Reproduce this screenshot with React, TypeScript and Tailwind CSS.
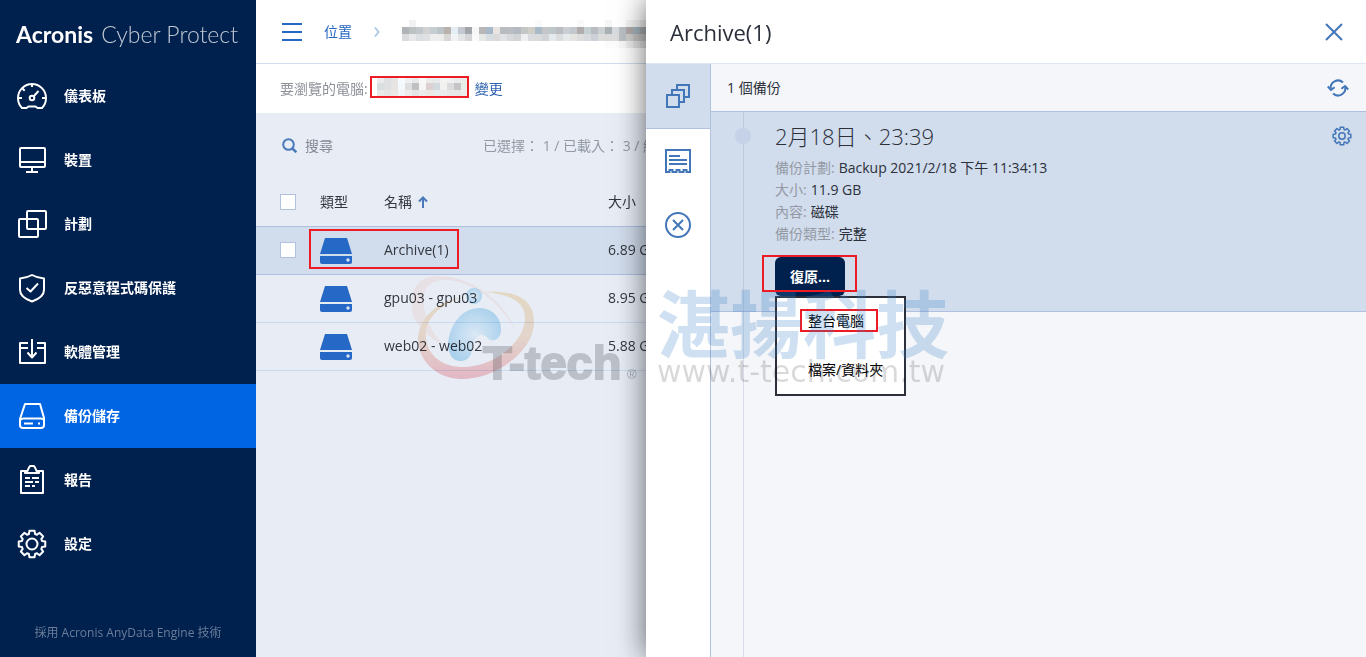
import type { ReactNode } from "react";
import clsx from "clsx";

const FONT = "font-['Open_Sans','Noto_Sans_CJK_TC',sans-serif]";

function gearPath(c: number, outer: number, inner: number) {
  const step = Math.PI / 4;
  const points: string[] = [];
  for (let i = 0; i < 8; i++) {
    const a = i * step - Math.PI / 2;
    [
      [-0.3, inner],
      [-0.19, outer],
      [0.19, outer],
      [0.3, inner],
    ].forEach(([offset, r]) => {
      const x = c + r * Math.cos(a + offset);
      const y = c + r * Math.sin(a + offset);
      points.push(`${x.toFixed(2)} ${y.toFixed(2)}`);
    });
  }
  return `M${points.join("L")}Z`;
}

function NavIcon({ children }: { children: ReactNode }) {
  return (
    <svg
      viewBox="0 0 32 32"
      className="size-8 shrink-0"
      fill="none"
      stroke="currentColor"
      strokeWidth="2"
      strokeLinejoin="round"
      aria-hidden="true"
    >
      {children}
    </svg>
  );
}

const NAV_ITEMS: { label: string; active?: boolean; icon: ReactNode }[] = [
  {
    label: "儀表板",
    icon: (
      <>
        <path d="M6 28C3 25 2 21 2 18a14 14 0 0 1 28 0c0 3-1 7-4 10h-4.500l-2-1.500h-7l-2 1.500z" />
        <path d="M16 4v3M2 18h4M26 18h4M6.500 8.500l2.200 2.200M17.500 16.500l5-5.500" />
        <circle cx="16" cy="18" r="2.300" />
      </>
    ),
  },
  {
    label: "裝置",
    icon: (
      <>
        <rect x="4" y="4" width="25" height="19" rx="1" />
        <path d="M4 18h25M16 23v5M10 28h12" />
      </>
    ),
  },
  {
    label: "計劃",
    icon: (
      <>
        <rect x="11" y="3" width="19" height="18" rx="1" />
        <rect x="3" y="11" width="19" height="18" rx="1" />
      </>
    ),
  },
  {
    label: "反惡意程式碼保護",
    icon: (
      <>
        <path d="M16 3c3.500 2 7.500 3 12 3.500V18c0 5-5 9-12 11.500C9 27 4 23 4 18V6.500C8.500 6 12.500 5 16 3z" />
        <path d="M10.500 16l4 3.500 7.500-8" />
      </>
    ),
  },
  {
    label: "軟體管理",
    icon: (
      <>
        <path d="M12 7H4v20h25V7h-8M4 12h8M21 12h8M16 3v18" />
        <path d="M11.500 16.500l4.500 5 4.500-5" />
      </>
    ),
  },
  {
    label: "備份儲存",
    active: true,
    icon: (
      <>
        <path d="M9 4h15l4 14v7q0 3-3 3H7q-3 0-3-3v-6z" />
        <path d="M4.500 20q1-1.500 3-1.500h17q2.500 0 3.500 1.500M8 23.500h9M22 23.500h2" />
      </>
    ),
  },
  {
    label: "報告",
    icon: (
      <>
        <path d="M9 7H5v22h22V7h-4" />
        <path d="M9 9V7h2.500l1-2.500L14 2h4l1.500 2.500 1 2.500H23v2z" />
        <path d="M9 14h5M16 14h7M9 18h8M19 18h4M9 22h5M16 22h3" />
      </>
    ),
  },
  {
    label: "設定",
    icon: (
      <>
        <path d={gearPath(16, 13.5, 10.5)} />
        <circle cx="16" cy="16" r="5.500" />
      </>
    ),
  },
];

const ROWS = [
  { name: "Archive(1)", size: "6.89 GB", selected: true },
  { name: "gpu03 - gpu03", size: "8.95 GB", selected: false },
  { name: "web02 - web02", size: "5.88 GB", selected: false },
];

const DETAILS = [
  { label: "備份計劃:", value: "Backup 2021/2/18 下午 11:34:13" },
  { label: "大小:", value: "11.9 GB" },
  { label: "內容:", value: "磁碟" },
  { label: "備份類型:", value: "完整" },
];

// Masked text, one colour per 7px block
const PATH_BLOCKS = [
  "#fff #f1f2f2 #fff #fff #fff #fff #fff #fff #fff #fff #fff #fff #fff #fff #fff #fff #fff #fff #fff #f8fafb #fff #fff #fff #fff #fff #f8f9fb #fff #fff #fff #f5f7f7 #fff #fff #f4f5f5 #f2f3f3 #ededee",
  "#b0b3b7 #bcc1c2 #c1c8cb #d3d3d3 #c6ced4 #bbc4c6 #b8b1ac #e4eef5 #c3c9ce #a2a6aa #f6f7f7 #b8b6b7 #a9b8c9 #e8e4e1 #b9bcbe #babec2 #b4bac2 #c4c7c4 #d0ccc6 #a9b9c5 #c5c6c7 #bdc6c9 #babec2 #cbcfd5 #c2c8ce #b2adad #c4d0d3 #b9bdc2 #cbd0d1 #a9b1b4 #d8dcde #b9c1c5 #b2aaa8 #a6b5bf #a8adb1",
  "#dadbdd #e8e9ea #dcdfe1 #dfe0e3 #ededed #ececed #d9d7d6 #f1f2f4 #e3e4e6 #d5d5d7 #fafafa #e6e7e7 #d7dde3 #dadadb #e1e2e5 #d8d9db #d3d4d7 #eeeff0 #d9dbde #d9dadc #d1d4d7 #e4eaed #dcdddf #e7eaed #e6e4e1 #dddddf #d6d9de #cdd0d8 #dcdcdd #dbdbdb #dcdcdc #bac0c4 #cfcfcf #c5c5c5 #c4c4c4",
  "#fff #fff #fff #fff #fff #fff #fff #fff #fff #fff #fff #fff #fff #fff #fff #fff #fff #fff #fff #fff #fff #fff #fff #fff #fff #fff #fff #fff #fff #fcfcfc #fcfcfc #f8f8f8 #ededed #e4e4e4 #dedede",
].map((row) => row.split(" "));

const HOST_BLOCKS = [
  "#ebeced #dfe0e1 #e4e4e5 #f9fafb #eef0f1 #e9e9e9 #f8f8f7 #ebebea #e8eaeb #f3f3f2 #f0f0f0 #eaecec #ebebea",
  "#d9dee1 #dedfe0 #e8e4e2 #f4f9fd #dfdfdf #bfc0c1 #f6f6f6 #dcd1d0 #d2d9df #f1f1f0 #dadcdd #c7c4c9 #e6ece6",
  "#e9e9ea #e5e5e6 #e9e8e7 #f3f4f5 #ececec #e4e4e5 #ebebeb #ebe8e5 #e9eced #eaeaea #e7e7e7 #e6e6e7 #ececec",
].map((row) => row.split(" "));

function Blocks({ rows, label }: { rows: string[][]; label: string }) {
  const width = rows[0].length * 7;
  const height = rows.length * 7;
  return (
    <svg width={width} height={height} className="shrink-0" shapeRendering="crispEdges" role="img" aria-label={label}>
      {rows.map((row, y) =>
        row.map((fill, x) => <rect key={`${x}-${y}`} x={x * 7} y={y * 7} width="7" height="7" fill={fill} />)
      )}
    </svg>
  );
}

function Sidebar() {
  return (
    <aside className="flex w-64 shrink-0 flex-col bg-[#00204d] text-white">
      <a
        href="#"
        className="flex h-16 items-center gap-2 pl-4 pt-1 font-['Lato',sans-serif] text-[23px] whitespace-nowrap"
      >
        <span className="font-bold">Acronis</span>
        <span className="font-light text-white/75">Cyber Protect</span>
      </a>
      <nav className="flex-1">
        {NAV_ITEMS.map((item) => (
          <a
            key={item.label}
            href="#"
            className={clsx("flex h-16 items-center gap-4 px-4 text-sm font-semibold", item.active && "bg-[#0065e3]")}
          >
            <NavIcon>{item.icon}</NavIcon>
            {item.label}
          </a>
        ))}
      </nav>
      <p className="pb-4 text-center text-xs text-[#6a7d9a]">採用 Acronis AnyData Engine 技術</p>
    </aside>
  );
}

function DriveIcon() {
  return (
    <svg width="32" height="26" viewBox="0 0 32 26" className="mt-0.5 block" aria-hidden="true">
      <path d="M5 0h22l5 16H0z" fill="#2668c5" />
      <path d="M0 18h32v6q0 2-2 2H2q-2 0-2-2z" fill="#2668c5" />
      <circle cx="28" cy="22" r="1.700" fill="#d9e4f4" />
    </svg>
  );
}

function SwirlMark() {
  return (
    <svg
      width="240"
      height="112"
      viewBox="406 272 240 112"
      className="pointer-events-none absolute top-[272px] left-[150px] mix-blend-multiply"
      aria-hidden="true"
    >
      <defs>
        <linearGradient id="ring" x1="0" y1="0" x2="0" y2="1">
          <stop offset="0" stopColor="#fbeacb" />
          <stop offset="0.5" stopColor="#fbe6d2" />
          <stop offset="1" stopColor="#fac6cd" />
        </linearGradient>
        <radialGradient id="body" cx="0.5" cy="0.5" r="0.55">
          <stop offset="0" stopColor="#f1fbff" />
          <stop offset="1" stopColor="#bce2f6" />
        </radialGradient>
      </defs>
      <path
        d="M412 310C409 288 420 276 438 276c28 0 66 20 79 58-14-30-45-54-72-54-18 0-25 12-20 32 3 13 10 25 20 34-18-9-31-22-33-36z"
        fill="#fff4f0"
      />
      <path
        d="M484 292C516 290 534 299 534 322C534 352 494 380 460 379C434 378 418 358 418 340C418 322 432 303 462 297C438 306 424 320 426 338C428 357 444 368 466 367C496 365 524 342 525 319C526 302 510 294 484 292z"
        fill="url(#ring)"
      />
      <circle cx="474" cy="296" r="8" fill="url(#body)" />
      <path
        d="M448 344C450 322 464 308 479 308C494 308 502 320 501 331C500 338 496 341 491 340C487 339 486 334 480 335C474 336 473 346 471 354C468 363 455 363 451 356C449 352 448 348 448 344z"
        fill="url(#body)"
      />
      <text
        x="483"
        y="379"
        fontSize="47"
        fontWeight="700"
        fontFamily="Liberation Sans, sans-serif"
        fill="#55565c"
        stroke="#55565c"
        strokeWidth="2"
        opacity="0.28"
      >
        T-tech
      </text>
      <text x="627" y="379" fontSize="13" fontFamily="Liberation Sans, sans-serif" fill="#b3b6bf">
        ®
      </text>
    </svg>
  );
}

function ArchiveList() {
  return (
    <main className="relative min-w-0 flex-1 overflow-hidden bg-[#e7ecf5]">
      {/* Breadcrumb */}
      <header className="flex h-16 items-center border-b border-[#d1dcee] bg-white pl-[26px]">
        <button type="button" aria-label="Menu" className="shrink-0 text-[#2668c5]">
          <svg width="20" height="18" viewBox="0 0 20 18" stroke="currentColor" strokeWidth="2">
            <path d="M0 1h20M0 9h20M0 17h20" />
          </svg>
        </button>
        <a href="#" className="ml-[22px] shrink-0 text-sm text-[#2668c5]">
          位置
        </a>
        <svg width="6" height="10" viewBox="0 0 6 10" className="mx-[22px] shrink-0" fill="none" stroke="#b3cae9" strokeWidth="2" aria-hidden="true">
          <path d="M1 0.500l3.500 4.500L1 9.500" />
        </svg>
        <div className="shrink-0 pt-1">
          <Blocks rows={PATH_BLOCKS} label="Location" />
        </div>
      </header>

      {/* Browsing machine */}
      <div className="flex h-[49px] items-center bg-white pl-6 text-sm whitespace-nowrap">
        <span className="text-[#8d9198]">要瀏覽的電腦:</span>
        <span className="mr-1.5 mb-1 ml-0.5 flex h-[22px] w-[99px] shrink-0 items-center overflow-hidden border-2 border-[#ed1c24] pl-[5px]">
          <Blocks rows={HOST_BLOCKS} label="Machine" />
        </span>
        <a href="#" className="text-[#2f62b0]">
          變更
        </a>
      </div>

      {/* Search */}
      <div className="flex h-[65px] items-center gap-2 pl-[26px] text-sm whitespace-nowrap">
        <svg width="15" height="15" viewBox="0 0 15 15" fill="none" stroke="#4a7ab9" strokeWidth="2" className="shrink-0" aria-hidden="true">
          <circle cx="6.500" cy="6.500" r="5.300" />
          <path d="M10.500 10.500l3.800 3.800" strokeWidth="2.500" />
        </svg>
        <input
          type="search"
          aria-label="搜尋"
          placeholder="搜尋"
          className="w-[170px] shrink-0 bg-transparent placeholder:text-[#858b96] focus:outline-none"
        />
        <span className="ml-auto shrink-0 -mr-9 text-[#949aa5]">已選擇： 1 / 已載入： 3 / 總計： 3</span>
      </div>

      <table className="w-[480px] table-fixed border-collapse text-left text-sm text-[#33373f]">
        <thead>
          <tr className="h-12 border-b border-[#aebfdf]">
            <th className="w-16 pl-6">
              <input type="checkbox" aria-label="全選" className="block size-4 appearance-none border border-[#b1c1df] bg-white" />
            </th>
            <th className="w-16 font-normal">類型</th>
            <th className="w-56 font-normal">
              <span className="flex items-center gap-1.5">
                名稱
                <svg width="10" height="12" viewBox="0 0 10 12" fill="none" stroke="#4a7ab9" strokeWidth="2" aria-hidden="true">
                  <path d="M5 12V1.500M1 5.500l4-4 4 4" />
                </svg>
              </span>
            </th>
            <th className="font-normal">大小</th>
          </tr>
        </thead>
        <tbody>
          {ROWS.map((row) => (
            <tr
              key={row.name}
              className={clsx("h-12 border-b", row.selected ? "border-[#aebfdf] bg-[#d1dcec]" : "border-[#c9daef]")}
            >
              <td className="pl-6">
                {row.selected && (
                  <input type="checkbox" aria-label={row.name} className="block size-4 appearance-none border border-[#b1c1df] bg-white" />
                )}
              </td>
              <td className="relative">
                <DriveIcon />
                {row.selected && (
                  <span className="absolute top-0.5 -left-[11px] h-10 w-[150px] border-2 border-[#ed1c24]" />
                )}
              </td>
              <td>{row.name}</td>
              <td className="whitespace-nowrap">{row.size}</td>
            </tr>
          ))}
        </tbody>
      </table>

      <SwirlMark />
    </main>
  );
}

function PanelTabs() {
  return (
    <nav className="flex w-[65px] shrink-0 flex-col border-r border-[#b0c1df] bg-white text-[#4376b8]">
      <button type="button" aria-label="備份" className="flex h-[65px] items-center justify-center border-b border-[#b0c1df] bg-[#d1dcec]">
        <svg width="24" height="24" viewBox="0 0 24 24" fill="none" stroke="currentColor" strokeWidth="2">
          <path d="M1 11h12v12H1z" />
          <path d="M6 11V6h12v12h-5" />
          <path d="M11 6V1h12v12h-5" />
        </svg>
      </button>
      <button type="button" aria-label="詳細資料" className="flex h-16 items-center justify-center">
        <svg width="26" height="24" viewBox="0 0 26 24" fill="none" stroke="currentColor" strokeWidth="2">
          <path d="M1 1h24v22h-3.500v-2h-3v2h-4v-2h-3v2h-4v-2h-3v2H1z" />
          <path d="M4 7h11M4 11h18M4 15h18" />
        </svg>
      </button>
      <button type="button" aria-label="刪除" className="flex h-16 items-center justify-center">
        <svg width="26" height="26" viewBox="0 0 26 26" fill="none" stroke="currentColor" strokeWidth="2">
          <circle cx="13" cy="13" r="12" />
          <path d="M8 8l10 10M18 8L8 18" />
        </svg>
      </button>
    </nav>
  );
}

function RestoreMenu() {
  return (
    <div className="relative mt-3 w-fit">
      <button type="button" className="h-[39px] w-[70px] rounded-md bg-[#00204d] text-sm font-bold text-white">
        復原...
      </button>
      <span className="pointer-events-none absolute -top-0.5 -left-[13px] h-[37px] w-[95px] border-2 border-[#ed1c24]" />
      <ul className="absolute top-full left-0 flex h-[100px] w-[131px] flex-col border-2 border-[#2b303b] bg-white py-[11px] text-sm whitespace-nowrap text-black">
        <li>
          <button type="button" className="ml-[23px] flex h-[23px] w-[78px] items-center border-2 border-[#ed1c24] pl-1.5">
            整台電腦
          </button>
        </li>
        <li className="mt-[26px]">
          <button type="button" className="ml-[31px] flex h-[23px] items-center">
            檔案/資料夾
          </button>
        </li>
      </ul>
    </div>
  );
}

function ArchivePanel() {
  return (
    <section className="relative flex w-[720px] shrink-0 flex-col bg-white text-[#2b303b] shadow-[0_0_28px_rgba(0,0,0,0.6)]">
      <header className="flex h-16 items-center justify-between border-b border-[#dfe6f2] pr-[23px] pl-6">
        <h1 className="pt-0.5 text-[22px]">Archive(1)</h1>
        <button type="button" aria-label="關閉" className="text-[#4376b8]">
          <svg width="18" height="18" viewBox="0 0 18 18" stroke="currentColor" strokeWidth="2">
            <path d="M1 1l16 16M17 1L1 17" />
          </svg>
        </button>
      </header>

      <div className="flex flex-1">
        <PanelTabs />
        <div className="flex min-w-0 flex-1 flex-col bg-[#f4f6f9]">
          <div className="flex h-12 items-center justify-between border-b border-[#aebfdf] pr-[17px] pl-4 text-sm">
            <span>1 個備份</span>
            <button type="button" aria-label="重新整理" className="text-[#4376b8]">
              <svg width="22" height="18" viewBox="0 0 22 18" fill="none" stroke="currentColor" strokeWidth="2">
                <path d="M16 3.500A7.300 7.300 0 0 0 3.800 10M6 14.500A7.300 7.300 0 0 0 18.200 8" />
                <path d="M0.800 7.500l3.200 3.500 3.600-2.800M14.400 9.800L18 7l3.200 3.500" />
              </svg>
            </button>
          </div>

          <div className="relative flex-1">
            <article className="border-b border-[#aebfdf] bg-[#d1dcec] pt-2 pr-[14px] pb-[15px] pl-16">
              <div className="flex items-center justify-between">
                <h2 className="text-[22px] leading-8 font-light">2月18日、23:39</h2>
                <button type="button" aria-label="設定" className="text-[#4376b8]">
                  <svg width="20" height="20" viewBox="0 0 20 20" fill="none" stroke="currentColor" strokeWidth="1.500" strokeLinejoin="round">
                    <path d={gearPath(10, 9, 6.8)} />
                    <circle cx="10" cy="10" r="3.200" />
                  </svg>
                </button>
              </div>
              <dl className="mt-[5px] text-sm">
                {DETAILS.map((d) => (
                  <div key={d.label} className="flex h-[22px] items-center gap-1">
                    <dt className="text-[#949aa5]">{d.label}</dt>
                    <dd>{d.value}</dd>
                  </div>
                ))}
              </dl>
              <RestoreMenu />
            </article>

            {/* Timeline */}
            <span className="pointer-events-none absolute inset-y-0 left-8 w-px bg-[#8095b8]/25" />
            <span className="absolute top-4 left-6 size-4 rounded-full bg-[#c5d2e7]" />
          </div>
        </div>
      </div>

      {/* Watermark */}
      <div className="pointer-events-none absolute top-[284px] left-[11px] whitespace-nowrap">
        <p className="font-['Noto_Sans_CJK_TC',sans-serif] text-[73px] leading-[72px] font-bold text-[#3d85c6]/25">
          湛揚科技
        </p>
        <p className="font-['DejaVu_Sans',sans-serif] text-[30px] leading-8 text-black/15">www.t-tech.com.tw</p>
      </div>
    </section>
  );
}

export default function App() {
  return (
    <div className={clsx("flex min-h-screen overflow-hidden", FONT)}>
      <Sidebar />
      <ArchiveList />
      <ArchivePanel />
    </div>
  );
}
